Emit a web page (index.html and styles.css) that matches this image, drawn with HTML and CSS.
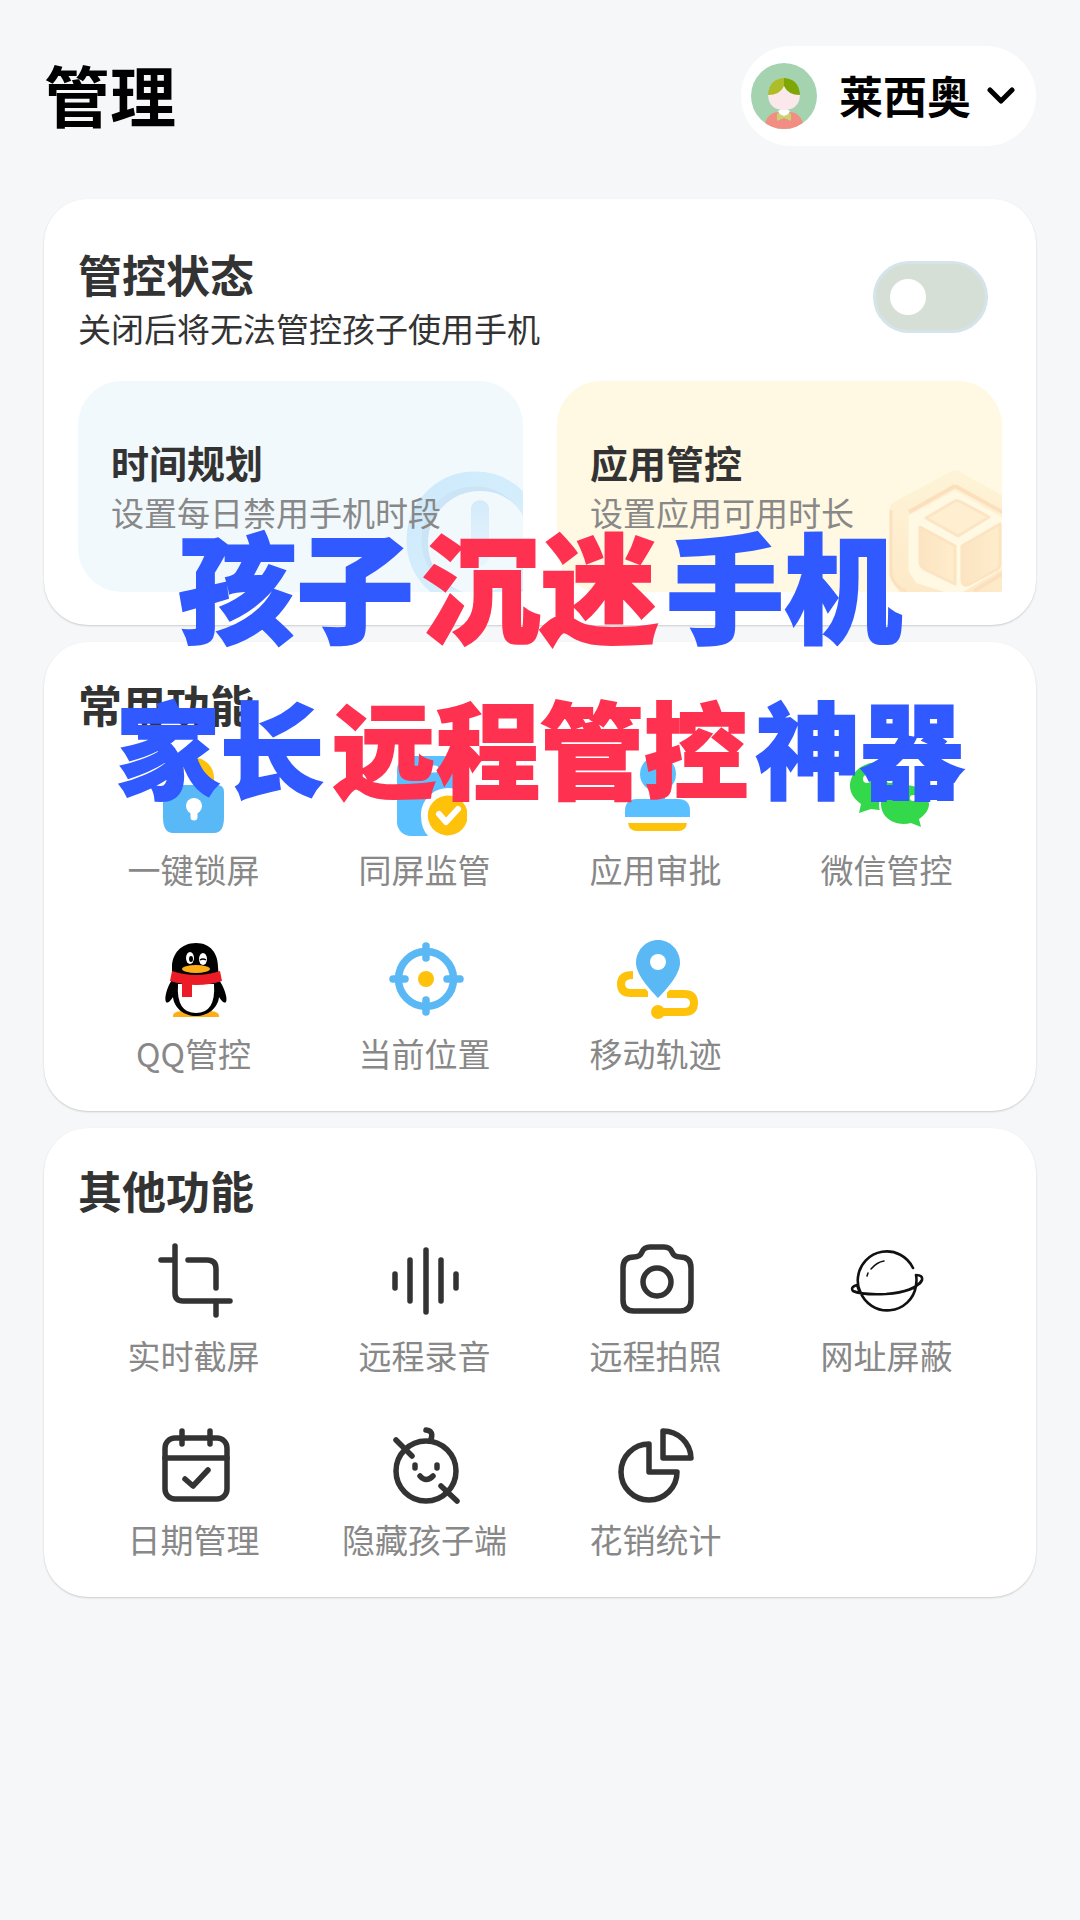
FILE: index.html
```html
<!DOCTYPE html>
<html lang="zh-CN">
<head>
<meta charset="utf-8">
<meta name="viewport" content="width=device-width, initial-scale=1">
<title>管理</title>
<link rel="stylesheet" href="styles.css">
</head>
<body>
<div class="page">
  <header class="header">
    <h1 class="page-title">管理</h1>
    <button class="profile" type="button">
      <svg class="avatar" viewBox="0 0 66 66" aria-hidden="true">
        <defs><clipPath id="avatar-clip"><circle cx="33" cy="33" r="33"/></clipPath></defs>
        <g clip-path="url(#avatar-clip)">
          <rect width="66" height="66" fill="#a5d3b0"/>
          <path d="M13 66Q15 49 28 49H38Q51 49 53 66Z" fill="#f18d83"/>
          <path d="M27 48L33 45L39 48L36 54H30Z" fill="#fff"/>
          <path d="M17 32Q18 47 33 47Q48 47 49 32L33 20Z" fill="#fae8ea"/>
          <path d="M33 15Q18 16 17 32Q29 32 33 23Z" fill="#adbd27"/>
          <path d="M33 15Q48 16 49 32Q37 32 33 23Z" fill="#7ea706"/>
          <path d="M26 50L33 53L40 50V58L33 55L26 58Z" fill="#c6d474"/>
        </g>
      </svg>
      <span class="profile-name">莱西奥</span>
      <svg class="chevron" viewBox="0 0 28 18" aria-hidden="true"><path d="M3 3L14 14L25 3"/></svg>
    </button>
  </header>

  <main class="cards">
    <section class="card">
      <div class="status">
        <label class="status-text" for="control-switch">
          <span class="card-title">管控状态</span>
          <span class="status-note">关闭后将无法管控孩子使用手机</span>
        </label>
        <input class="switch" type="checkbox" role="switch" id="control-switch">
      </div>
      <div class="tiles">
        <button class="tile tile-blue" type="button">
          <svg class="tile-art" viewBox="0 0 124 128" aria-hidden="true">
            <defs>
              <linearGradient id="ring" x1="0" y1="0" x2="1" y2="1"><stop offset="0" stop-color="#cdeafb"/><stop offset="1" stop-color="#dcf1fd"/></linearGradient>
              <linearGradient id="hand" x1="0" y1="0" x2="0" y2="1"><stop offset="0" stop-color="#d3ebfa"/><stop offset="1" stop-color="#e8f5fd"/></linearGradient>
            </defs>
            <circle cx="81" cy="79" r="58" fill="none" stroke="#cbe4f6" stroke-width="12"/>
            <circle cx="76" cy="76" r="61" fill="none" stroke="url(#ring)" stroke-width="15"/>
            <rect x="72" y="36" width="18" height="66" rx="9" fill="url(#hand)"/>
          </svg>
          <span class="tile-title">时间规划</span>
          <span class="tile-note">设置每日禁用手机时段</span>
        </button>
        <button class="tile tile-yellow" type="button">
          <svg class="tile-art" viewBox="0 0 124 128" aria-hidden="true">
            <defs>
              <linearGradient id="hex" x1="0" y1="0" x2="0" y2="1"><stop offset="0" stop-color="#fef3d6"/><stop offset="1" stop-color="#fde8c6"/></linearGradient>
              <linearGradient id="face" x1="0" y1="0" x2="1" y2="0"><stop offset="0" stop-color="#fbe4c2"/><stop offset="1" stop-color="#ffedcb"/></linearGradient>
            </defs>
            <path d="M77 16L21 46V110L32 127L80 142L134 110V48Z" fill="none" stroke="url(#hex)" stroke-width="19" stroke-linejoin="round"/>
            <path d="M77 22L31 48M77 22L128 50M124 110L96 127" fill="none" stroke="#fce0bd" stroke-width="4"/>
            <path d="M13 46V110Q15 122 28 127" fill="none" stroke="#fce1c0" stroke-width="3"/>
            <path d="M48 54L77 37Q80 36 83 38L111 53L80 72Z" fill="#ffeecf" stroke="#fce5c5" stroke-width="3" stroke-linejoin="round"/>
            <path d="M42 63L77 82V120L46 105Q42 102 42 97Z" fill="url(#face)" stroke="#fce3c2" stroke-width="3" stroke-linejoin="round"/>
            <path d="M84 82L122 60V100Q122 104 118 106L90 121Q84 122 84 116Z" fill="url(#face)" stroke="#fce3c2" stroke-width="3" stroke-linejoin="round"/>
          </svg>
          <span class="tile-title">应用管控</span>
          <span class="tile-note">设置应用可用时长</span>
        </button>
      </div>
    </section>

    <section class="card card-grid">
      <h2 class="card-title">常用功能</h2>
      <div class="grid">
        <button class="item" type="button">
          <svg class="icon" viewBox="0 0 80 80" aria-hidden="true">
            <path d="M23 34V22A16 16 0 0 1 56 22V34" fill="none" stroke="#ffc20a" stroke-width="8"/>
            <path d="M16 29H63Q70 29 70 36V61Q70 77 60 77H19Q9 77 9 61V36Q9 29 16 29Z" fill="#58b9f6"/>
            <circle cx="40" cy="50" r="8" fill="#fff"/><path d="M40 52V61" stroke="#fff" stroke-width="7" stroke-linecap="round"/>
          </svg>
          <span>一键锁屏</span>
        </button>
        <button class="item" type="button">
          <svg class="icon" viewBox="0 0 80 80" aria-hidden="true">
            <rect x="12" y="0" width="60" height="80" rx="14" fill="#5bc0ff"/>
            <path d="M34 13H50" stroke="#fff" stroke-width="7" stroke-linecap="round"/>
            <path d="M36 60A27 27 0 0 1 84 42V80H43Q36 72 36 60Z" fill="#fff"/>
            <path d="M82 54A20 20 0 1 0 82 65Z" fill="#ffc20a"/>
            <path d="M54 58L61 66L73 53" fill="none" stroke="#fff" stroke-width="6" stroke-linecap="round" stroke-linejoin="round"/>
          </svg>
          <span>同屏监管</span>
        </button>
        <button class="item" type="button">
          <svg class="icon" viewBox="0 0 80 80" aria-hidden="true">
            <circle cx="42" cy="18" r="18" fill="#5bc0ff"/>
            <path d="M34 30H49V43H62Q74 43 74 55V61H9V55Q9 43 21 43H34Z" fill="#5bc0ff"/>
            <path d="M12 67H71Q70 75 62 75H21Q13 75 12 67Z" fill="#ffc20a"/>
          </svg>
          <span>应用审批</span>
        </button>
        <button class="item" type="button">
          <svg class="icon" viewBox="0 0 80 80" aria-hidden="true">
            <path d="M32 6C50 6 62 17 62 30C62 44 50 54 32 54L24 53L12 57L14 48C7 43 3 37 3 30C3 17 15 6 32 6Z" fill="#33d94a"/>
            <ellipse cx="58" cy="49" rx="26" ry="22" fill="#fff"/>
            <path d="M58 29C72 29 82 38 82 48C82 54 78 59 72 63L74 71L64 67C47 71 34 61 34 48C34 37 45 29 58 29Z" fill="#33d94a"/>
            <g fill="#fff"><circle cx="20" cy="23" r="4"/><circle cx="43" cy="23" r="4"/><circle cx="50" cy="42" r="3"/><circle cx="66" cy="42" r="3"/></g>
          </svg>
          <span>微信管控</span>
        </button>
        <button class="item" type="button">
          <svg class="icon" viewBox="0 0 80 80" aria-hidden="true">
            <path d="M19 77Q18 72 27 71H57Q66 72 65 77Z" fill="#fdad18"/>
            <path d="M42 3C57 3 64 14 64 27L65 40C70 47 74 58 72 62C70 64 67 60 65 57C64 68 54 76 42 76C30 76 20 68 19 57C17 60 14 64 12 62C10 58 13 47 18 40V27C18 14 27 3 42 3Z" fill="#000"/>
            <path d="M24 44H60Q62 73 42 73Q22 73 24 44Z" fill="#fff"/>
            <path d="M18 31Q42 39 66 31L68 41Q43 49 16 41Z" fill="#eb1c26"/><path d="M28 43H38V57H28Z" fill="#eb1c26"/>
            <ellipse cx="36" cy="18" rx="4" ry="6" fill="#fff"/><ellipse cx="49" cy="19" rx="4" ry="6" fill="#fff"/>
            <ellipse cx="37" cy="19" rx="2" ry="3" fill="#000"/><path d="M46 20Q49 18 52 20" fill="none" stroke="#000" stroke-width="1.5"/>
            <ellipse cx="42" cy="29" rx="14" ry="4" fill="#fdad18"/>
          </svg>
          <span>QQ管控</span>
        </button>
        <button class="item" type="button">
          <svg class="icon" viewBox="0 0 80 80" aria-hidden="true">
            <g fill="none" stroke="#5ab8f5" stroke-width="7.5" stroke-linecap="round"><circle cx="41" cy="39" r="27.5"/><path d="M41 6V18M41 60V72M8 39H20M62 39H75"/></g>
            <circle cx="41" cy="39" r="8" fill="#ffc20a"/>
          </svg>
          <span>当前位置</span>
        </button>
        <button class="item" type="button">
          <svg class="icon" viewBox="0 0 80 80" aria-hidden="true">
            <g fill="none" stroke="#ffc20a" stroke-width="8"><path d="M17 35Q5 35 5 44Q5 53 15 53H32M51 54H68Q78 54 78 63Q78 72 68 72H42"/></g>
            <circle cx="42" cy="72" r="7" fill="#ffc20a"/>
            <path d="M42 0C54 0 64 10 64 23C64 34 51 49 42 58C33 49 20 34 20 23C20 10 30 0 42 0Z" fill="#5ab8f5" stroke="#fff" stroke-width="6" paint-order="stroke"/>
            <circle cx="42" cy="22" r="8" fill="#fff"/>
          </svg>
          <span>移动轨迹</span>
        </button>
      </div>
    </section>

    <section class="card card-grid">
      <h2 class="card-title">其他功能</h2>
      <div class="grid">
        <button class="item" type="button">
          <svg class="icon line" viewBox="0 0 80 80" aria-hidden="true"><path d="M21 4V51Q21 59 29 59H76M7 18H20M34 18H53Q62 18 62 27V46M62 60V73"/></svg>
          <span>实时截屏</span>
        </button>
        <button class="item" type="button">
          <svg class="icon line" viewBox="0 0 80 80" aria-hidden="true"><path d="M10 32V46M25 18V59M41 8V70M56 18V59M71 32V46"/></svg>
          <span>远程录音</span>
        </button>
        <button class="item" type="button">
          <svg class="icon line" viewBox="0 0 80 80" aria-hidden="true"><path d="M7 26Q7 15 18 15Q24 15 26 10Q28 5 34 5H48Q54 5 56 10Q58 15 64 15Q75 15 75 26V58Q75 69 64 69H18Q7 69 7 58Z"/><circle cx="41" cy="40" r="14"/></svg>
          <span>远程拍照</span>
        </button>
        <button class="item" type="button">
          <svg class="icon planet" viewBox="0 0 80 80" aria-hidden="true"><path d="M66 26A29 29 0 0 0 11 35Q10 43 13 49A29 29 0 0 0 69 44M69 43Q70 38 69 33Q76 33 75 38Q74 42 69 43M75 38Q68 50 39 52Q14 53 6 49Q3 45 10 43L13 51"/><path class="shine" d="M24 27Q30 20 37 19M20 34L21 31"/></svg>
          <span>网址屏蔽</span>
        </button>
        <button class="item" type="button">
          <svg class="icon line" viewBox="0 0 80 80" aria-hidden="true"><rect x="11" y="12" width="62" height="61" rx="10"/><path d="M11 32H73M28 5V18M56 5V18M31 53L39 60L54 44"/></svg>
          <span>日期管理</span>
        </button>
        <button class="item" type="button">
          <svg class="icon line" viewBox="0 0 80 80" aria-hidden="true"><circle cx="41" cy="45" r="30"/><path d="M41 4Q49 5 46 13M11 14L27 30M56 60L72 75M30 39V42M52 39V42M35 50Q41 57 48 50"/></svg>
          <span>隐藏孩子端</span>
        </button>
        <button class="item" type="button">
          <svg class="icon line" viewBox="0 0 80 80" aria-hidden="true"><path d="M33 18V46H61A28 28 0 1 1 33 18ZM47 5V32H75A28 28 0 0 0 47 5Z"/></svg>
          <span>花销统计</span>
        </button>
      </div>
    </section>
  </main>

  <div class="slogan">
    <p class="slogan-top"><span>孩子</span><em>沉迷</em><span>手机</span></p>
    <p class="slogan-bottom"><span>家长</span><em>远程管控</em><span>神器</span></p>
  </div>
</div>
</body>
</html>
```
FILE: styles.css
```css
* {
  box-sizing: border-box;
}

body {
  margin: 0;
  background: #f5f7f8;
  color: #333;
  font-family: "Noto Sans CJK SC", sans-serif;
}

h1,
h2,
p {
  margin: 0;
}

button {
  border: 0;
  padding: 0;
  background: none;
  color: inherit;
  font: inherit;
  cursor: pointer;
}

.page {
  position: relative;
  min-height: 100vh;
  padding: 46px 44px;
}

.header {
  display: flex;
  align-items: flex-start;
  justify-content: space-between;
  margin-bottom: 53px;
}

.page-title {
  color: #000;
  font-size: 66px;
  font-weight: 700;
  line-height: 94px;
}

.profile {
  display: flex;
  align-items: center;
  height: 100px;
  padding: 0 21px 0 10px;
  border-radius: 50px;
  background: #fff;
  color: #000;
  font-size: 44px;
  font-weight: 700;
}

.profile-name {
  padding-bottom: 2px;
}

.avatar {
  width: 66px;
  height: 66px;
  margin-right: 22px;
}

.chevron {
  width: 28px;
  height: 18px;
  margin-left: 16px;
  fill: none;
  stroke: #000;
  stroke-width: 5;
  stroke-linecap: round;
  stroke-linejoin: round;
}

.cards {
  display: flex;
  flex-direction: column;
  gap: 17px;
}

.card {
  padding: 44px 34px 33px;
  border-radius: 44px;
  background: #fff;
  box-shadow: 0 1px 2px rgba(0, 0, 0, 0.18);
}

.card-grid {
  padding: 31px 34px 5px;
}

.card-title {
  display: block;
  font-size: 44px;
  font-weight: 700;
  line-height: 62px;
}

.status {
  display: flex;
  align-items: center;
  justify-content: space-between;
  margin-bottom: 30px;
  padding-right: 14px;
}

.status-note {
  display: block;
  font-size: 33px;
  line-height: 46px;
}

.switch {
  appearance: none;
  display: flex;
  align-items: center;
  width: 115px;
  height: 72px;
  margin: 0;
  padding: 0 14px;
  border: 3px solid #d5e3ea;
  border-radius: 36px;
  background: #d6dfd6;
}

.switch::before {
  content: "";
  width: 36px;
  height: 36px;
  border-radius: 50%;
  background: #fff;
}

.switch:checked {
  justify-content: flex-end;
  background: #58b9f6;
}

.tiles {
  display: grid;
  grid-template-columns: 1fr 1fr;
  gap: 34px;
}

.tile {
  position: relative;
  padding: 56px 33px 55px;
  border-radius: 44px 44px 0 44px;
  text-align: left;
}

.tile-blue {
  background: #f1f9fd;
}

.tile-yellow {
  background: #fff8e3;
}

.tile-art {
  position: absolute;
  right: 0;
  bottom: 0;
  width: 124px;
  height: 128px;
}

.tile-title,
.tile-note {
  display: block;
  position: relative;
  line-height: 50px;
}

.tile-title {
  font-size: 38px;
  font-weight: 700;
}

.tile-note {
  color: #888;
  font-size: 33px;
}

.grid {
  display: grid;
  grid-template-columns: repeat(4, 1fr);
  margin-top: 3px;
}

.item {
  display: flex;
  flex-direction: column;
  align-items: center;
  gap: 9px;
  padding: 18px 0 29px;
  color: #888;
  font-size: 33px;
  line-height: 48px;
  white-space: nowrap;
}

.icon {
  width: 80px;
  height: 80px;
  overflow: visible;
}

.line,
.planet {
  fill: none;
  stroke: #333;
  stroke-width: 5.5;
  stroke-linecap: round;
  stroke-linejoin: round;
}

.planet {
  stroke: #111;
  stroke-width: 2.6;
}

.shine {
  stroke-width: 1.5;
}

.slogan {
  position: absolute;
  top: 522px;
  left: 0;
  right: 0;
  color: #3059ff;
  font-weight: 900;
  white-space: nowrap;
  pointer-events: none;
  -webkit-text-stroke: 2px currentColor;
}

.slogan em {
  color: #ff3150;
  font-style: normal;
}

.slogan-top,
.slogan-bottom {
  display: flex;
  justify-content: center;
  gap: 8px;
}

.slogan-top {
  margin-bottom: 49px;
  font-size: 118px;
  line-height: 122px;
}

.slogan-bottom {
  font-size: 104px;
  line-height: 106px;
}
```
